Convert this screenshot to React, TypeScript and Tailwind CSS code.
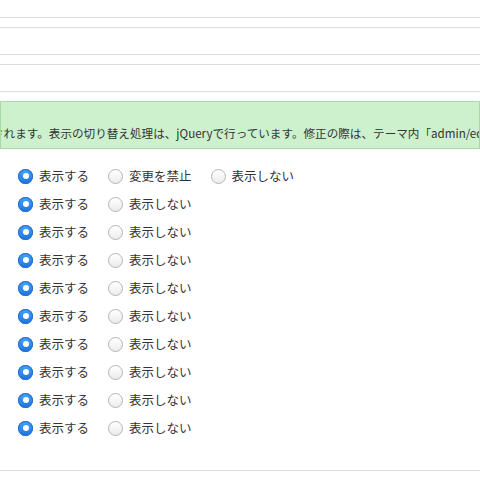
const rows: { options: string[] }[] = [
  { options: ['表示する', '変更を禁止', '表示しない'] },
  ...Array.from({ length: 9 }, () => ({ options: ['表示する', '表示しない'] })),
];

function Radio({ checked }: { checked: boolean }) {
  if (checked) {
    return (
      <span className="flex size-[15px] shrink-0 items-center justify-center rounded-full bg-gradient-to-b from-[#4ba3f7] to-[#1a73e0] shadow-[inset_0_0_0_1px_#1f6fd0]">
        <span className="size-[6px] rounded-full bg-white" />
      </span>
    );
  }
  return (
    <span className="size-[15px] shrink-0 rounded-full border border-[#b4b4b4] bg-gradient-to-b from-[#ffffff] to-[#ececec]" />
  );
}

export default function App() {
  return (
    <div
      className="h-[480px] w-[480px] overflow-hidden bg-white text-[#333]"
      style={{ fontFamily: '"Noto Sans CJK JP", "Noto Sans", sans-serif' }}
    >
      <div className="h-[18px] border-b border-[#dcdcdc]" />
      <div className="mt-[9px] h-[28px] border-y border-[#dcdcdc]" />
      <div className="mt-[9px] h-[28px] border-y border-[#dcdcdc]" />
      <div className="mt-[9px] flex h-[48px] items-end overflow-hidden border border-[#a9d9a9] bg-[#cdf1cd] pb-[7px]">
        <p className="ml-[-9px] whitespace-nowrap text-[11.6px] leading-[16px]">
          されます。表示の切り替え処理は、jQueryで行っています。修正の際は、テーマ内「admin/edit.php」を編集してください。
        </p>
      </div>

      <div className="flex flex-col pt-[13px] text-[12.5px]">
        {rows.map((row, i) => (
          <div key={i} className="flex h-[28px] items-center pl-[18px]">
            {row.options.map((label, j) => (
              <label key={j} className="mr-[19px] flex items-center gap-[6px]">
                <Radio checked={j === 0} />
                <span className="leading-none">{label}</span>
              </label>
            ))}
          </div>
        ))}
      </div>

      <div className="mt-[28px] border-t border-[#dcdcdc]" />
    </div>
  );
}
